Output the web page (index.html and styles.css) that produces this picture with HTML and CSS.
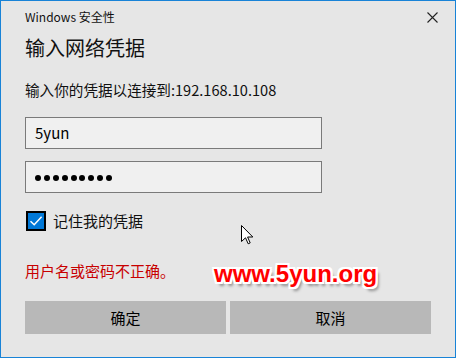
FILE: index.html
```html
<!DOCTYPE html>
<html lang="zh-CN">
<head>
<meta charset="utf-8">
<title>Windows 安全性</title>
<link rel="stylesheet" href="styles.css">
</head>
<body>
<div class="window">
  <div class="titlebar">
    <span class="title">Windows 安全性</span>
    <svg class="close" width="11" height="11" viewBox="0 0 11 11"><path d="M0.5 0.5 L10.5 10.5 M10.5 0.5 L0.5 10.5" stroke="#222" stroke-width="1.1" fill="none"/></svg>
  </div>
  <div class="heading">输入网络凭据</div>
  <div class="prompt">输入你的凭据以连接到:192.168.10.108</div>
  <div class="field field-user"><span class="value">5yun</span></div>
  <div class="field field-pass">
    <span class="dots"><i></i><i></i><i></i><i></i><i></i><i></i><i></i><i></i><i></i></span>
  </div>
  <div class="remember">
    <span class="checkbox">
      <svg width="16" height="16" viewBox="0 0 16 16"><path d="M2.5 8.2 L6.2 11.8 L13.6 3.8" stroke="#fff" stroke-width="1.5" fill="none"/></svg>
    </span>
    <span class="remember-label">记住我的凭据</span>
  </div>
  <div class="error">用户名或密码不正确。</div>
  <div class="buttons">
    <div class="btn">确定</div>
    <div class="btn">取消</div>
  </div>
  <div class="watermark">www.5yun.org</div>
  <svg class="cursor" width="13" height="20" viewBox="0 0 13 20"><path d="M0.5 0.5 L0.5 16.5 L4.5 12.8 L7.2 18.8 L9.2 17.9 L6.6 12 L11.8 12 Z" fill="#fff" stroke="#000" stroke-width="1" stroke-linejoin="miter"/></svg>
</div>
</body>
</html>
```

FILE: styles.css
```css
html, body {
  margin: 0;
  padding: 0;
  background: #e6e6e6;
}
.window {
  position: relative;
  box-sizing: border-box;
  width: 456px;
  height: 358px;
  border: 1px solid #1883d7;
  background: #e6e6e6;
  padding: 8px 24px 0 24px;
  display: flex;
  flex-direction: column;
  font-family: "Noto Sans CJK SC", "Noto Sans", sans-serif;
  color: #000;
}
.titlebar {
  display: flex;
  justify-content: space-between;
  align-items: center;
  height: 16px;
  margin-right: -7px;
}
.title {
  font-size: 12px;
  line-height: 16px;
  color: #111;
}
.close {
  display: block;
}
.heading {
  margin-top: 10px;
  font-size: 20px;
  line-height: 26px;
  color: #111;
}
.prompt {
  margin-top: 19px;
  font-size: 14.6px;
  line-height: 20px;
  color: #111;
}
.field {
  box-sizing: border-box;
  height: 32px;
  width: 297px;
  border: 1px solid #7a7a7a;
  background: #f0f0f0;
  display: flex;
  align-items: center;
  padding-left: 9px;
}
.field-user {
  margin-top: 17px;
}
.field-pass {
  margin-top: 12px;
}
.value {
  font-size: 15px;
  line-height: 20px;
  color: #000;
}
.dots {
  display: flex;
  gap: 2.9px;
  margin-top: 1px;
}
.dots i {
  display: block;
  width: 6px;
  height: 6px;
  border-radius: 50%;
  background: #000;
}
.remember {
  margin-top: 18px;
  display: flex;
  align-items: center;
  height: 20px;
}
.checkbox {
  box-sizing: border-box;
  margin-left: 1px;
  width: 20px;
  height: 20px;
  border: 2px solid #000;
  background: #0078d7;
  display: flex;
  align-items: center;
  justify-content: center;
}
.checkbox svg {
  display: block;
}
.remember-label {
  margin-left: 7px;
  font-size: 15px;
  line-height: 20px;
  color: #111;
}
.error {
  margin-top: 30px;
  font-size: 15px;
  line-height: 20px;
  color: #c80000;
}
.buttons {
  margin-top: 20px;
  display: flex;
  gap: 4px;
}
.btn {
  width: 201px;
  height: 33px;
  background: #b8b8b8;
  display: flex;
  align-items: center;
  justify-content: center;
  font-size: 15px;
  color: #000;
}
.watermark {
  position: absolute;
  left: 213px;
  top: 261px;
  font-family: "Liberation Sans", Arial, sans-serif;
  font-weight: bold;
  font-size: 24px;
  line-height: 1;
  color: #ff0000;
  text-shadow:
    -2px 0 0 #fff, 2px 0 0 #fff, 0 -2px 0 #fff, 0 2px 0 #fff,
    -2px -2px 0 #fff, 2px -2px 0 #fff, -2px 2px 0 #fff, 2px 2px 0 #fff,
    -1px -2px 0 #fff, 1px -2px 0 #fff, -1px 2px 0 #fff, 1px 2px 0 #fff,
    3px 4px 3px rgba(0,0,0,0.4);
}
.cursor {
  position: absolute;
  left: 240px;
  top: 224px;
}
```
